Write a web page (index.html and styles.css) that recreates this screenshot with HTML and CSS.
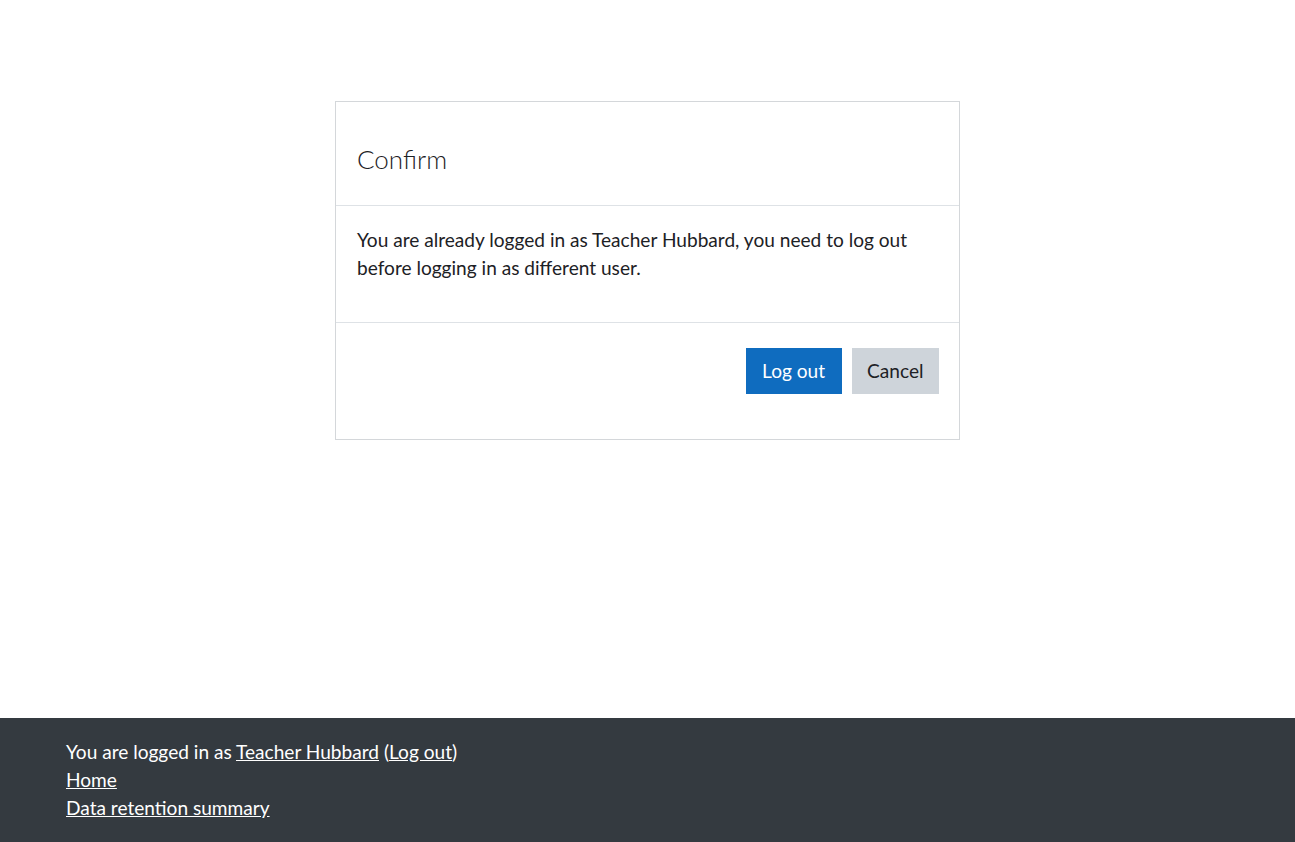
FILE: index.html
```html
<!DOCTYPE html>
<html lang="en">
<head>
<meta charset="utf-8">
<title>Confirm</title>
<link rel="stylesheet" href="styles.css">
</head>
<body>
<div class="page">
  <main class="main">
    <div class="card" role="alertdialog">
      <div class="card-header">
        <h4 class="card-title">Confirm</h4>
      </div>
      <div class="card-body">
        <p>You are already logged in as Teacher Hubbard, you need to log out before logging in as different user.</p>
      </div>
      <div class="card-footer">
        <button class="btn btn-primary" type="button">Log out</button>
        <button class="btn btn-secondary" type="button">Cancel</button>
      </div>
    </div>
  </main>
  <footer class="footer">
    <div class="logininfo">You are logged in as <a href="#">Teacher Hubbard</a> (<a href="#">Log out</a>)</div>
    <div><a href="#">Home</a></div>
    <div><a href="#">Data retention summary</a></div>
  </footer>
</div>
</body>
</html>
```
FILE: styles.css
```css
html, body {
  margin: 0;
  padding: 0;
}
body {
  font-family: "Lato", "Open Sans", sans-serif;
  font-size: 19.1px;
  line-height: 28px;
  color: #1d2125;
  background: #fff;
}
.page {
  min-height: 100vh;
  display: flex;
  flex-direction: column;
}
.main {
  flex: 1;
  padding-top: 101px;
}
.card {
  width: 623px;
  margin: 0 auto;
  border: 1px solid #d4d7da;
  background: #fff;
}
.card-header {
  height: 104px;
  box-sizing: border-box;
  padding: 37px 21px 0;
  border-bottom: 1px solid #dee2e6;
}
.card-title {
  margin: 0;
  font-size: 26px;
  font-weight: 300;
  line-height: 40px;
  color: #1d2125;
}
.card-body {
  padding: 20px 21px 20px;
  border-bottom: 1px solid #dee2e6;
}
.card-body p {
  margin: 0 0 20px;
}
.card-footer {
  display: flex;
  justify-content: flex-end;
  gap: 10px;
  padding: 25px 20px 45px;
}
.btn {
  font-family: inherit;
  font-size: 19.1px;
  line-height: 28px;
  height: 46px;
  padding: 0 15px;
  border: 1px solid transparent;
  border-radius: 0;
  cursor: pointer;
}
.btn-primary {
  background: #0f6cbf;
  border-color: #0f6cbf;
  color: #fff;
  padding: 0 15.5px;
}
.btn-secondary {
  background: #ced4da;
  border-color: #ced4da;
  color: #1d2125;
  padding: 0 14.5px;
}
.footer {
  background: #343a40;
  color: #fff;
  padding: 20px 66px 20px;
}
.footer a {
  color: #fff;
  text-decoration: underline;
}
```
